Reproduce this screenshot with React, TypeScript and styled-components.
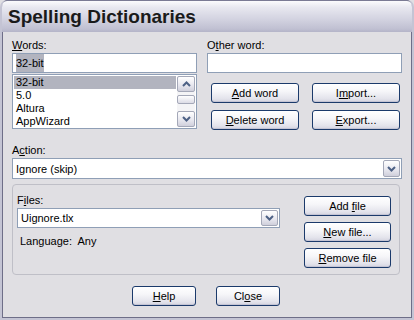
import React from "react";
import styled, { createGlobalStyle } from "styled-components";

const Global = createGlobalStyle`
  html, body { margin: 0; padding: 0; background: #e0dfe3; }
  body { font-family: "Liberation Sans", Arial, sans-serif; font-size: 11px; color: #000; }
`;

const Window = styled.div`
  width: 414px;
  height: 320px;
  box-sizing: border-box;
  background: #e0dfe3;
  border: 2px solid #c4c4d4;
  border-top: none;
  box-shadow: inset 0 0 0 1px #6e6e88;
  border-radius: 7px 7px 0 0;
  display: flex;
  flex-direction: column;
  overflow: hidden;
`;

const TitleBar = styled.div`
  height: 32px;
  flex: none;
  box-sizing: border-box;
  margin: 0 -2px;
  padding: 4px 0 0 7px;
  border-radius: 7px 7px 0 0;
  border: 1px solid #7a7a94;
  border-bottom: none;
  background: linear-gradient(#fbfbfd 0%, #e8e8f0 20%, #d2d2e0 60%, #c0c0d2 90%, #b4b4c8 100%);
  font-family: "Liberation Sans", Arial, sans-serif;
  font-weight: bold;
  font-size: 19px;
  line-height: 24px;
  color: #1a1a1a;
`;

const Body = styled.div`
  flex: 1;
  display: flex;
  flex-direction: column;
  padding: 6px 9px 0 9px;
  border-left: 1px solid #6e6e88;
  border-right: 1px solid #6e6e88;
  border-bottom: 1px solid #6e6e88;
`;

const TopRow = styled.div`
  display: grid;
  grid-template-columns: 185px 195px;
  column-gap: 10px;
`;

const Column = styled.div`
  display: flex;
  flex-direction: column;
`;

const Label = styled.div<{ $top?: number }>`
  height: 15px;
  line-height: 15px;
  margin-top: ${(p) => p.$top ?? 0}px;
  white-space: nowrap;
`;

const Key = styled.span`
  text-decoration: underline;
`;

const TextBox = styled.div`
  height: 20px;
  box-sizing: border-box;
  border: 1px solid #8f9fb6;
  background: #fff;
  padding: 0 3px;
  line-height: 18px;
  display: flex;
  align-items: center;
`;

const SelText = styled.span`
  background: #b2b4bf;
`;

const ListBox = styled.div`
  margin-top: 1px;
  height: 55px;
  box-sizing: border-box;
  border: 1px solid #8f9fb6;
  background: #fff;
  display: flex;
  padding: 1px;
`;

const ListItems = styled.div`
  flex: 1;
  display: flex;
  flex-direction: column;
`;

const ListItem = styled.div<{ $selected?: boolean }>`
  height: 13px;
  line-height: 13px;
  padding-left: 2px;
  background: ${(p) => (p.$selected ? "#b2b4bf" : "transparent")};
`;

const ScrollBar = styled.div`
  width: 18px;
  margin: 0 0 0 1px;
  display: flex;
  flex-direction: column;
  background: #f4f4f6;
`;

const ScrollBtn = styled.div`
  height: 16px;
  box-sizing: border-box;
  border: 1px solid #a4a8b8;
  border-radius: 2px;
  background: linear-gradient(#ffffff, #e6e6ee 60%, #d0d0dc);
  display: flex;
  align-items: center;
  justify-content: center;
`;

const Thumb = styled.div`
  height: 9px;
  margin: 3px 0 0 0;
  box-sizing: border-box;
  border: 1px solid #a4a8b8;
  border-radius: 2px;
  background: linear-gradient(#ffffff, #dcdce6);
`;

const Spacer = styled.div`
  flex: 1;
`;

const BtnGrid = styled.div`
  margin: 10px 2px 0 4px;
  display: grid;
  grid-template-columns: 88px 88px;
  column-gap: 13px;
  row-gap: 7px;
`;

const ButtonFrame = styled.div<{ $w?: number }>`
  width: ${(p) => (p.$w ? `${p.$w}px` : "auto")};
  height: 20px;
  box-sizing: border-box;
  border: 1px solid #1b3a6b;
  border-radius: 3px;
  background: linear-gradient(#ffffff 0%, #f6f6f9 40%, #e4e4ec 80%, #d4d4e0 100%);
  box-shadow: inset 0 -1px 0 #c4c4d4, inset 0 1px 0 #fff;
  display: flex;
  align-items: center;
  justify-content: center;
`;

const ButtonText = styled.span`
  white-space: pre;
`;

const Button = ({ w, children }: { w?: number; children: React.ReactNode }) => (
  <ButtonFrame $w={w}>
    <ButtonText>{children}</ButtonText>
  </ButtonFrame>
);

const Combo = styled.div<{ $h?: number }>`
  height: ${(p) => p.$h ?? 21}px;
  box-sizing: border-box;
  border: 1px solid #8f9fb6;
  background: #fff;
  display: flex;
  align-items: stretch;
  padding: 1px;
`;

const ComboText = styled.div`
  flex: 1;
  padding-left: 2px;
  display: flex;
  align-items: center;
`;

const DropBtn = styled.div`
  width: 17px;
  box-sizing: border-box;
  border: 1px solid #a4a8b8;
  border-radius: 2px;
  background: linear-gradient(#ffffff, #e6e6ee 60%, #cfcfdb);
  display: flex;
  align-items: center;
  justify-content: center;
`;

const Group = styled.div`
  margin: 5px 2px 0 0;
  height: 91px;
  box-sizing: border-box;
  border: 1px solid #bfbfc7;
  border-radius: 4px;
  display: flex;
  padding: 8px 0 0 4px;
`;

const GroupLeft = styled.div`
  width: 263px;
  display: flex;
  flex-direction: column;
`;

const GroupRight = styled.div`
  margin-left: 24px;
  display: flex;
  flex-direction: column;
  gap: 6px;
  padding-top: 3px;
`;

const Info = styled.div`
  margin-top: 6px;
  padding-left: 3px;
  height: 14px;
  line-height: 14px;
  white-space: pre;
`;

const Footer = styled.div`
  margin-top: 11px;
  display: flex;
  justify-content: center;
  gap: 20px;
  padding-right: 2px;
`;

const Chevron = ({ up }: { up?: boolean }) => (
  <svg width="9" height="6" viewBox="0 0 9 6">
    <path
      d={up ? "M1 5 L4.5 1.5 L8 5" : "M1 1 L4.5 4.5 L8 1"}
      fill="none"
      stroke="#4d6185"
      strokeWidth="2"
    />
  </svg>
);

export default function App() {
  return (
    <>
      <Global />
      <Window>
        <TitleBar>Spelling Dictionaries</TitleBar>
        <Body>
          <TopRow>
            <Column>
              <Label>
                <Key>W</Key>ords:
              </Label>
              <TextBox>
                <SelText>32-bit</SelText>
              </TextBox>
              <ListBox>
                <ListItems>
                  <ListItem $selected>32-bit</ListItem>
                  <ListItem>5.0</ListItem>
                  <ListItem>Altura</ListItem>
                  <ListItem>AppWizard</ListItem>
                </ListItems>
                <ScrollBar>
                  <ScrollBtn>
                    <Chevron up />
                  </ScrollBtn>
                  <Thumb />
                  <Spacer />
                  <ScrollBtn>
                    <Chevron />
                  </ScrollBtn>
                </ScrollBar>
              </ListBox>
            </Column>
            <Column>
              <Label>
                O<Key>t</Key>her word:
              </Label>
              <TextBox />
              <BtnGrid>
                <Button>
                  <Key>A</Key>dd word
                </Button>
                <Button>
                  I<Key>m</Key>port...
                </Button>
                <Button>
                  <Key>D</Key>elete word
                </Button>
                <Button>
                  <Key>E</Key>xport...
                </Button>
              </BtnGrid>
            </Column>
          </TopRow>
          <Label $top={13}>
            A<Key>c</Key>tion:
          </Label>
          <Combo>
            <ComboText>Ignore (skip)</ComboText>
            <DropBtn>
              <Chevron />
            </DropBtn>
          </Combo>
          <Group>
            <GroupLeft>
              <Label>
                F<Key>i</Key>les:
              </Label>
              <Combo $h={20}>
                <ComboText>Uignore.tlx</ComboText>
                <DropBtn>
                  <Chevron />
                </DropBtn>
              </Combo>
              <Info>Language:  Any</Info>
            </GroupLeft>
            <GroupRight>
              <Button w={87}>
                Add <Key>f</Key>ile
              </Button>
              <Button w={87}>
                <Key>N</Key>ew file...
              </Button>
              <Button w={87}>
                <Key>R</Key>emove file
              </Button>
            </GroupRight>
          </Group>
          <Footer>
            <Button w={64}>
              <Key>H</Key>elp
            </Button>
            <Button w={64}>
              Cl<Key>o</Key>se
            </Button>
          </Footer>
        </Body>
      </Window>
    </>
  );
}
